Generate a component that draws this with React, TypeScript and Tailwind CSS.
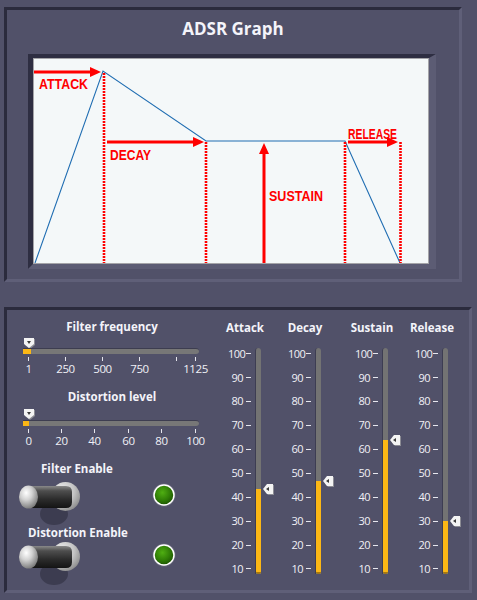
import React from 'react';

const SCALE = [100, 90, 80, 70, 60, 50, 40, 30, 20, 10];

const RED = '#ff0000';

const GraphPlot: React.FC = () => (
    <svg width={394} height={204} viewBox="34 59 394 204" className="block">
        <rect x={34} y={59} width={394} height={204} fill="#f4f8f9" />
        {/* envelope */}
        <polyline points="35,263 103,71 206,141 345,141 400,263" fill="none" stroke="#1f6db2" strokeWidth={1.1} />
        {/* phase markers */}
        <g stroke={RED} strokeWidth={2.6} strokeDasharray="2 1">
            <line x1={104} y1={73} x2={104} y2={263} />
            <line x1={206} y1={142} x2={206} y2={263} />
            <line x1={345} y1={142} x2={345} y2={263} />
            <line x1={400.5} y1={142} x2={400.5} y2={263} />
        </g>
        <g stroke={RED} strokeWidth={3}>
            <line x1={34} y1={72} x2={92} y2={72} />
            <line x1={107} y1={142} x2={195} y2={142} />
            <line x1={348} y1={142} x2={389} y2={142} />
            <line x1={264} y1={263} x2={264} y2={152} />
        </g>
        <g fill={RED}>
            <polygon points="90,67 101,72 90,77" />
            <polygon points="193,137 204,142 193,147" />
            <polygon points="387,137 398,142 387,147" />
            <polygon points="259,154 264,143 269,154" />
        </g>
        <g fill={RED} fontFamily="'Liberation Sans', Arial, sans-serif" fontWeight="bold" fontSize={15}>
            <text x={39} y={88.5} textLength={49} lengthAdjust="spacingAndGlyphs">ATTACK</text>
            <text x={110} y={159.5} textLength={41} lengthAdjust="spacingAndGlyphs">DECAY</text>
            <text x={269} y={200.5} textLength={54} lengthAdjust="spacingAndGlyphs">SUSTAIN</text>
            <text x={348} y={138.5} textLength={49} lengthAdjust="spacingAndGlyphs">RELEASE</text>
        </g>
    </svg>
);

const DownThumb: React.FC<{ left: number }> = ({ left }) => (
    <svg width={12} height={11} className="absolute top-0" style={{ left }}>
        <polygon points="1,1 11,1 11,7 6,11 1,7" fill="#8c8c94" />
        <polygon points="0,0 10,0 10,6 5,10 0,6" fill="#f4f4f4" />
        <polygon points="3,3 7,3 5,6" fill="#3a3a3a" />
    </svg>
);

const LeftThumb: React.FC = () => (
    <svg width={12} height={11} className="absolute left-[7px] top-[-5px]">
        <polygon points="1,6 5,1 11,1 11,11 5,11" fill="#8c8c94" />
        <polygon points="0,5 4,0 10,0 10,10 4,10" fill="#f4f4f4" />
        <polygon points="3,5 6,3 6,7" fill="#3a3a3a" />
    </svg>
);

interface Tick { x: number; label: string }

const HSlider: React.FC<{ ticks: Tick[]; fill: number; thumb: number; className: string }> = ({ ticks, fill, thumb, className }) => (
    <div className={`relative ml-[16px] w-[176px] ${className}`}>
        <DownThumb left={thumb} />
        <div className="relative h-[6px] rounded-r-sm bg-[#777777] border-t border-[#3d3d50]">
            <div className="h-full bg-[#fbb715]" style={{ width: fill }} />
        </div>
        <div className="relative h-[4px] mt-[3px]">
            {ticks.map(t => (
                <span key={t.x} className="absolute top-0 w-px h-[4px] bg-[#e6e6ee]" style={{ left: t.x }} />
            ))}
        </div>
        <div className="relative h-[16px]">
            {ticks.filter(t => t.label).map(t => (
                <span
                    key={t.x}
                    className="absolute top-0 -translate-x-1/2 text-[11.5px] leading-[16px] tracking-[-0.4px] text-[#f0f0f6]"
                    style={{ left: t.x + 0.5 }}
                >
                    {t.label}
                </span>
            ))}
        </div>
    </div>
);

const VSlider: React.FC<{ label: string; fill: number; className: string }> = ({ label, fill, className }) => (
    <div className={`flex flex-col items-center w-[34px] ${className}`}>
        <div className="mt-[10px] h-[16px] leading-[16px] text-[11.5px] font-bold text-[#f4f4fa] whitespace-nowrap">{label}</div>
        <div className="mt-[6px] flex self-start">
            <div className="flex flex-col">
                {SCALE.map(v => (
                    <div key={v} className="h-[23.9px] flex items-center">
                        <span className="w-[15px] text-right text-[11px] tracking-[-0.5px] text-[#f0f0f6]">{v}</span>
                        <span className="ml-[3px] w-[5px] h-px bg-[#e6e6ee]" />
                    </div>
                ))}
            </div>
            <div className="relative ml-[4px] mt-[6px] w-[6px] h-[226px] rounded-t-full rounded-b-sm bg-[#737373] border-l border-[#3d3d52]">
                <div className="absolute bottom-0 left-0 right-0 bg-[#fbb715] rounded-b-sm border-b-2 border-[#a8780c]" style={{ height: fill }}>
                    <LeftThumb />
                </div>
            </div>
        </div>
    </div>
);

const Toggle: React.FC<{ id: string }> = ({ id }) => (
    <svg width={62} height={44} className="block shrink-0">
        <defs>
            <radialGradient id={`ball-${id}`} cx="38%" cy="32%" r="70%">
                <stop offset="0" stopColor="#ffffff" />
                <stop offset="0.45" stopColor="#d2d2d2" />
                <stop offset="1" stopColor="#7c7c7c" />
            </radialGradient>
            <radialGradient id={`base-${id}`} cx="35%" cy="30%" r="75%">
                <stop offset="0" stopColor="#f2f2f2" />
                <stop offset="0.6" stopColor="#c4c4c4" />
                <stop offset="1" stopColor="#8e8e8e" />
            </radialGradient>
            <linearGradient id={`lever-${id}`} x1="0" y1="0" x2="0" y2="1">
                <stop offset="0" stopColor="#8a8a8a" />
                <stop offset="0.22" stopColor="#4e4e4e" />
                <stop offset="0.6" stopColor="#2c2c2c" />
                <stop offset="1" stopColor="#141414" />
            </linearGradient>
        </defs>
        <ellipse cx={35} cy={33} rx={14} ry={11} fill="#3c3c50" />
        <circle cx={46.5} cy={15.5} r={14.5} fill={`url(#base-${id})`} />
        <path d="M11 5 H47 Q53 5 53 11 V21 Q53 27 47 27 H11 Z" fill={`url(#lever-${id})`} />
        <ellipse cx={9.5} cy={16} rx={9.5} ry={11.5} fill={`url(#ball-${id})`} />
    </svg>
);

const Led: React.FC<{ id: string }> = ({ id }) => (
    <svg width={24} height={24} className="block shrink-0">
        <defs>
            <radialGradient id={`led-${id}`} cx="42%" cy="38%" r="65%">
                <stop offset="0" stopColor="#4fae12" />
                <stop offset="0.6" stopColor="#2f7d06" />
                <stop offset="1" stopColor="#1c5203" />
            </radialGradient>
        </defs>
        <circle cx={12} cy={12} r={11.5} fill="#ffffff" opacity={0.12} />
        <circle cx={12} cy={12} r={10} fill={`url(#led-${id})`} stroke="#ffffff" strokeWidth={1.5} />
    </svg>
);

const FREQ_TICKS: Tick[] = [
    { x: 5, label: '1' }, { x: 42, label: '250' }, { x: 79, label: '500' },
    { x: 116, label: '750' }, { x: 153, label: '' }, { x: 172, label: '1125' },
];

const DIST_TICKS: Tick[] = [
    { x: 5, label: '0' }, { x: 38, label: '20' }, { x: 71, label: '40' },
    { x: 105, label: '60' }, { x: 138, label: '80' }, { x: 172, label: '100' },
];

const App: React.FC = () => {
    return (
        <div className="w-[477px] h-[600px] overflow-hidden bg-[#515169] pt-[7px] pl-[4px] font-['Open_Sans','Noto_Sans',sans-serif]">
            {/* graph panel */}
            <div className="w-[458px] h-[275px] border-[3px] border-t-[#2b2b3d] border-l-[#2b2b3d] border-r-[#5f5f78] border-b-[#5f5f78] flex flex-col items-start">
                <h1 className="self-center pt-[7px] h-[31px] text-[17px] leading-[24px] font-bold text-[#f4f4fa]">ADSR Graph</h1>
                <div className="ml-[21px] mt-[13px] w-[408px] h-[215px] border-t-[4px] border-l-[5px] border-r-[7px] border-b-[5px] border-t-[#2e2e42] border-l-[#2e2e42] border-r-[#5c5c74] border-b-[#5c5c74]">
                    <div className="border border-[#a4a4a8]">
                        <GraphPlot />
                    </div>
                </div>
            </div>

            {/* controls panel */}
            <div className="mt-[25px] w-[468px] h-[286px] border-[3px] border-t-[#2b2b3d] border-l-[#2b2b3d] border-r-[#5f5f78] border-b-[#5f5f78] flex">
                <div className="w-[221px] shrink-0 flex flex-col">
                    <div className="mt-[9px] w-[210px] h-[16px] text-center text-[11.5px] leading-[16px] font-bold text-[#f4f4fa]">Filter frequency</div>
                    <HSlider ticks={FREQ_TICKS} fill={8} thumb={1} className="mt-[3px] pt-[10px]" />
                    <div className="mt-[12px] w-[210px] h-[16px] text-center text-[11.5px] leading-[16px] font-bold text-[#f4f4fa]">Distortion level</div>
                    <HSlider ticks={DIST_TICKS} fill={6} thumb={1} className="mt-[4px] pt-[11px]" />

                    <div className="mt-[12px] w-[140px] h-[16px] text-center text-[11.5px] leading-[16px] font-bold text-[#f4f4fa]">Filter Enable</div>
                    <div className="mt-[4px] flex items-start">
                        <div className="ml-[12px]"><Toggle id="f" /></div>
                        <div className="ml-[71px] mt-[2px]"><Led id="f" /></div>
                    </div>
                    <div className="w-[142px] h-[16px] text-center text-[11.5px] leading-[16px] font-bold text-[#f4f4fa] whitespace-nowrap">Distortion Enable</div>
                    <div className="flex items-start">
                        <div className="ml-[12px]"><Toggle id="d" /></div>
                        <div className="ml-[71px] mt-[2px]"><Led id="d" /></div>
                    </div>
                </div>

                <div className="flex">
                    <VSlider label="Attack" fill={85} className="" />
                    <VSlider label="Decay" fill={93} className="ml-[26px]" />
                    <VSlider label="Sustain" fill={134} className="ml-[33px]" />
                    <VSlider label="Release" fill={53} className="ml-[26px]" />
                </div>
            </div>
        </div>
    );
};

export default App;
